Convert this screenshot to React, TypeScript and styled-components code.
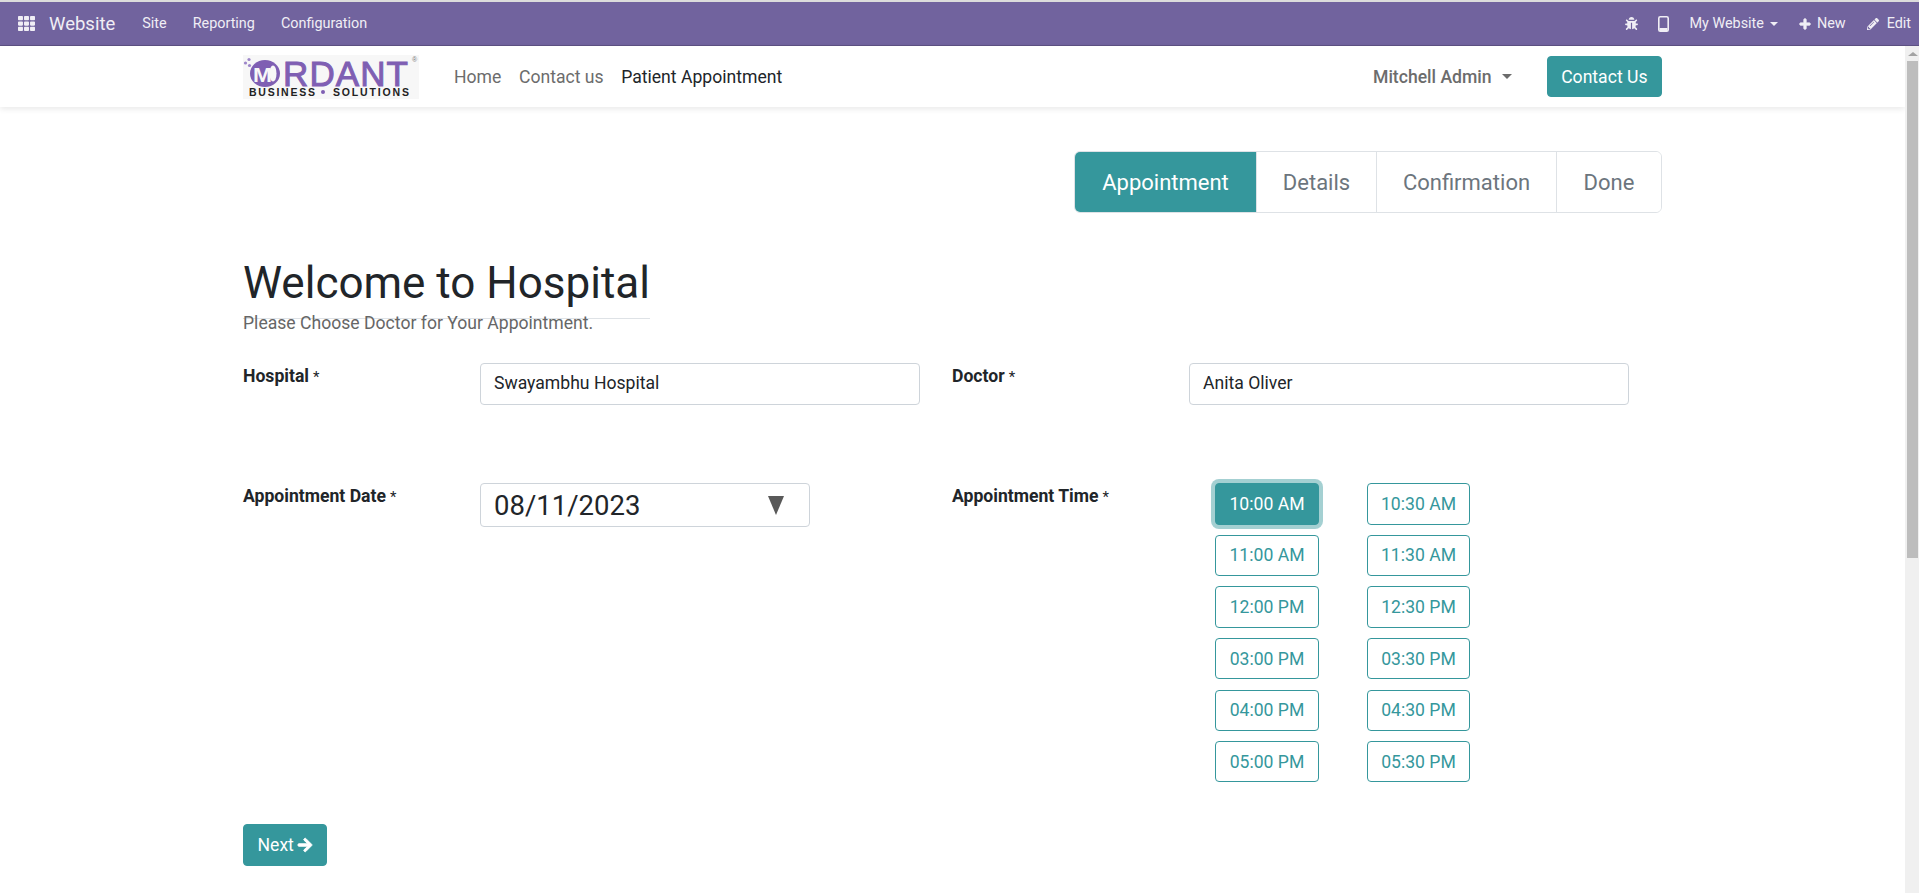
import React from "react";
import styled, { createGlobalStyle } from "styled-components";
import { FaArrowRight, FaBug, FaPencilAlt, FaPlus, FaTh } from "react-icons/fa";

const teal = "#35979c";

const Global = createGlobalStyle`
    html, body {
        margin: 0;
        padding: 0;
        height: 100%;
        overflow: hidden;
        background: #fff;
    }
    body {
        font-family: Roboto, "Noto Sans", sans-serif;
        font-size: 17.6px;
        color: #212529;
    }
    * { box-sizing: border-box; }
`;

const Page = styled.div`
    height: 893px;
    display: flex;
    flex-direction: column;
    overflow: hidden;
`;

const AdminBar = styled.nav`
    flex: none;
    height: 46px;
    border-top: 2px solid #dcdcdc;
    border-bottom: 1px solid #5d5183;
    background: #71639e;
    color: #f0eef5;
    display: flex;
    align-items: center;
    justify-content: space-between;
    padding: 0 8px 0 18px;
    font-size: 14.4px;
`;

const BarGroup = styled.div`
    display: flex;
    align-items: center;
`;

const AppName = styled.span`
    font-size: 18.5px;
    margin: 0 27px 0 14px;
`;

const BarLink = styled.span<{ $gap?: number; $iconGap?: number }>`
    margin-right: ${(p) => p.$gap ?? 0}px;
    display: inline-flex;
    align-items: center;
    gap: ${(p) => p.$iconGap ?? 6}px;
`;

const Caret = styled.i<{ $color?: string; $size?: number }>`
    display: inline-block;
    border-top: ${(p) => p.$size ?? 5}px solid ${(p) => p.$color ?? "currentColor"};
    border-left: ${(p) => p.$size ?? 5}px solid transparent;
    border-right: ${(p) => p.$size ?? 5}px solid transparent;
`;

const Body = styled.div`
    flex: 1;
    display: flex;
    min-height: 0;
`;

const Main = styled.div`
    flex: 1;
    min-width: 0;
`;

const Rail = styled.aside`
    flex: none;
    width: 14px;
    background: #f0f0f0;
    display: flex;
    flex-direction: column;
    align-items: flex-end;
    padding-right: 1px;
`;

const RailArrow = styled.div`
    height: 15px;
    width: 11px;
    display: flex;
    align-items: center;
    justify-content: center;

    &::before {
        content: "";
        border-bottom: 4px solid #a3a3a3;
        border-left: 5px solid transparent;
        border-right: 5px solid transparent;
    }
`;

const RailThumb = styled.div`
    width: 11px;
    height: 497px;
    background: #bdbdbd;
`;

const SiteHeader = styled.header`
    height: 61px;
    background: #fff;
    box-shadow: 0 2px 6px rgba(0, 0, 0, 0.09);
`;

const Container = styled.div`
    width: 1419px;
    margin: 0 auto;
`;

const HeaderRow = styled(Container)`
    height: 100%;
    display: flex;
    align-items: center;
`;

const LogoMark = styled.svg`
    display: block;
    margin-right: 35px;
`;

const Menu = styled.div`
    display: flex;
    gap: 17.6px;
    flex: 1;
`;

const MenuLink = styled.span<{ $active?: boolean }>`
    font-size: 17.6px;
    color: ${(p) => (p.$active ? "#212529" : "#6c6c6c")};
`;

const UserMenu = styled.span`
    font-size: 17.6px;
    font-weight: 500;
    color: #6c6c6c;
    display: inline-flex;
    align-items: center;
    gap: 10px;
    margin-right: 35px;
`;

const TealButton = styled.button`
    border: 1px solid ${teal};
    background: ${teal};
    color: #fff;
    border-radius: 4px;
    font-family: inherit;
    font-size: 17.6px;
    height: 41.6px;
    padding: 0 13.5px;
    display: inline-flex;
    align-items: center;
    gap: 3px;
`;

const Wizard = styled.div`
    display: flex;
    justify-content: flex-end;
    margin-top: 44px;
`;

const Steps = styled.div`
    display: flex;
    border: 1px solid #dee2e6;
    border-radius: 6px;
    overflow: hidden;
    height: 62px;
`;

const Step = styled.div<{ $active?: boolean; $width: number }>`
    width: ${(p) => p.$width}px;
    display: flex;
    align-items: center;
    justify-content: center;
    font-size: 22px;
    background: ${(p) => (p.$active ? teal : "#fff")};
    color: ${(p) => (p.$active ? "#fff" : "#6c757d")};
    & + & {
        border-left: 1px solid #dee2e6;
    }
`;

const Title = styled.h1`
    display: table;
    margin: 44px 0 0;
    font-size: 44px;
    line-height: 52.8px;
    font-weight: 400;
    color: #212529;
    border-bottom: 1px solid #dee2e6;
    padding-bottom: 8px;
`;

const Subtitle = styled.p`
    margin: -9px 0 0;
    font-size: 17.6px;
    line-height: 26.4px;
    color: #666;
`;

const FormGrid = styled.div`
    display: grid;
    grid-template-columns: 709px 710px;
    margin-top: 27px;
`;

const Field = styled.div<{ $height: number }>`
    display: flex;
    align-items: flex-start;
    height: ${(p) => p.$height}px;
`;

const Label = styled.label`
    width: 237px;
    flex: none;
    font-size: 17.6px;
    font-weight: 700;
    line-height: 26.4px;
    color: #212529;
`;

const Required = styled.span`
    font-weight: 400;
    font-size: 15px;
    margin-left: 4px;
`;

const TextBox = styled.div`
    width: 440px;
    height: 41.6px;
    border: 1px solid #ced4da;
    border-radius: 4px;
    padding: 0 13px 2px;
    display: flex;
    align-items: center;
    font-size: 17.6px;
    color: #212529;
`;

const DateBox = styled.div`
    width: 330px;
    height: 44px;
    border: 1px solid #ced4da;
    border-radius: 4px;
    padding: 0 13px;
    display: flex;
    align-items: center;
    justify-content: space-between;
    font-size: 27.5px;
    color: #212529;
`;

const DateArrow = styled.i`
    display: block;
    margin-right: 12px;
    border-top: 19px solid #595959;
    border-left: 8px solid transparent;
    border-right: 8px solid transparent;
`;

const Slots = styled.div`
    display: grid;
    grid-template-columns: 104px 103px;
    column-gap: 48px;
    row-gap: 10.2px;
    margin-left: 26px;
    align-content: start;
`;

const Slot = styled.button<{ $selected?: boolean }>`
    height: 41.4px;
    border: 1px solid ${teal};
    border-radius: 4px;
    font-family: inherit;
    font-size: 17.6px;
    padding: 0;
    background: ${(p) => (p.$selected ? teal : "#fff")};
    color: ${(p) => (p.$selected ? "#fff" : teal)};
    box-shadow: ${(p) => (p.$selected ? "0 0 0 4px rgba(53, 151, 156, 0.45)" : "none")};
`;

const times = ["10:00 AM", "10:30 AM", "11:00 AM", "11:30 AM", "12:00 PM", "12:30 PM", "03:00 PM", "03:30 PM", "04:00 PM", "04:30 PM", "05:00 PM", "05:30 PM"];

function Logo() {
    return (
        <LogoMark width="176" height="44" viewBox="0 0 176 44">
            <rect width="176" height="44" fill="#f7f7f7" />
            <circle cx="2.5" cy="8" r="1.6" fill="#9d86c9" />
            <circle cx="6" cy="4.5" r="1.6" fill="#9d86c9" />
            <circle cx="6.5" cy="10.5" r="1.6" fill="#9d86c9" />
            <ellipse cx="22" cy="18.5" rx="15" ry="13.5" fill="#7f5fb3" />
            <ellipse cx="30" cy="18.5" rx="3.5" ry="8" fill="#f7f7f7" />
            <text x="10" y="27" fontFamily="Liberation Sans" fontWeight="700" fontSize="20" fill="#f7f7f7" textLength="19" lengthAdjust="spacingAndGlyphs">M</text>
            <text x="40" y="31" fontFamily="Liberation Sans" fontWeight="400" fontSize="35" fill="#7f5fb3" stroke="#7f5fb3" strokeWidth="1" textLength="125" lengthAdjust="spacing">RDANT</text>
            <text x="169" y="7" fontFamily="Liberation Sans" fontSize="7" fill="#777">®</text>
            <text x="6" y="41" fontFamily="Liberation Sans" fontWeight="700" fontSize="10.5" fill="#222" textLength="66" lengthAdjust="spacing">BUSINESS</text>
            <circle cx="80" cy="37" r="2" fill="#7f5fb3" />
            <text x="90" y="41" fontFamily="Liberation Sans" fontWeight="700" fontSize="10.5" fill="#222" textLength="76" lengthAdjust="spacing">SOLUTIONS</text>
        </LogoMark>
    );
}

function MobileIcon() {
    return (
        <svg width="11" height="16" viewBox="0 0 11 16" fill="none">
            <rect x="0.8" y="0.8" width="9.4" height="14.4" rx="1.5" stroke="#f0eef5" strokeWidth="1.6" />
            <rect x="1.5" y="12" width="8" height="3" fill="#f0eef5" />
        </svg>
    );
}

export default function App() {
    return (
        <Page>
            <Global />
            <AdminBar>
                <BarGroup>
                    <FaTh size={17} />
                    <AppName>Website</AppName>
                    <BarLink $gap={26}>Site</BarLink>
                    <BarLink $gap={26}>Reporting</BarLink>
                    <BarLink>Configuration</BarLink>
                </BarGroup>
                <BarGroup>
                    <BarLink $gap={20}><FaBug size={13} /></BarLink>
                    <BarLink $gap={20}><MobileIcon /></BarLink>
                    <BarLink $gap={21}>My Website <Caret $size={4} /></BarLink>
                    <BarLink $gap={21}><FaPlus size={12} stroke="currentColor" strokeWidth={40} />New</BarLink>
                    <BarLink $iconGap={8}><FaPencilAlt size={12} />Edit</BarLink>
                </BarGroup>
            </AdminBar>
            <Body>
                <Main>
                    <SiteHeader>
                        <HeaderRow>
                            <Logo />
                            <Menu>
                                <MenuLink>Home</MenuLink>
                                <MenuLink>Contact us</MenuLink>
                                <MenuLink $active>Patient Appointment</MenuLink>
                            </Menu>
                            <UserMenu>Mitchell Admin <Caret $color="#6c6c6c" $size={5} /></UserMenu>
                            <TealButton>Contact Us</TealButton>
                        </HeaderRow>
                    </SiteHeader>
                    <Container>
                        <Wizard>
                            <Steps>
                                <Step $active $width={181}>Appointment</Step>
                                <Step $width={120}>Details</Step>
                                <Step $width={180}>Confirmation</Step>
                                <Step $width={105}>Done</Step>
                            </Steps>
                        </Wizard>
                        <Title>Welcome to Hospital</Title>
                        <Subtitle>Please Choose Doctor for Your Appointment.</Subtitle>
                        <FormGrid>
                            <Field $height={120}>
                                <Label>Hospital<Required>*</Required></Label>
                                <TextBox>Swayambhu Hospital</TextBox>
                            </Field>
                            <Field $height={120}>
                                <Label>Doctor<Required>*</Required></Label>
                                <TextBox>Anita Oliver</TextBox>
                            </Field>
                            <Field $height={341}>
                                <Label>Appointment Date<Required>*</Required></Label>
                                <DateBox>08/11/2023<DateArrow /></DateBox>
                            </Field>
                            <Field $height={341}>
                                <Label>Appointment Time<Required>*</Required></Label>
                                <Slots>
                                    {times.map((t, i) => (
                                        <Slot key={t} $selected={i === 0}>{t}</Slot>
                                    ))}
                                </Slots>
                            </Field>
                        </FormGrid>
                        <TealButton>Next <FaArrowRight size={16} stroke="currentColor" strokeWidth={30} /></TealButton>
                    </Container>
                </Main>
                <Rail>
                    <RailArrow />
                    <RailThumb />
                </Rail>
            </Body>
        </Page>
    );
}
